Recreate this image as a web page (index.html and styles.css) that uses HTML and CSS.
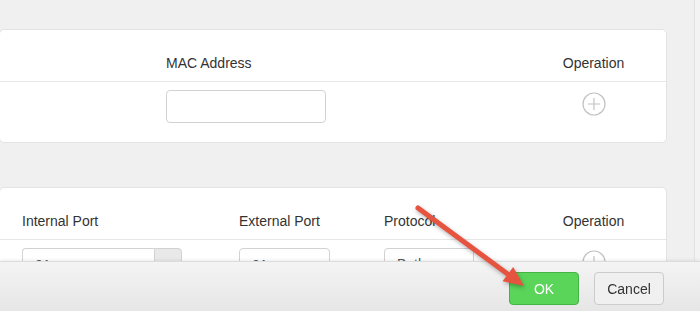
FILE: index.html
```html
<!DOCTYPE html>
<html lang="en">
<head>
    <meta charset="UTF-8">
    <title>Port Settings</title>
    <link rel="stylesheet" href="styles.css">
</head>
<body>
    <div class="layout">
        <main class="page">
            <section class="card card-mac">
                <div class="row head">
                    <div></div>
                    <div>MAC Address</div>
                    <div class="op">Operation</div>
                </div>
                <div class="row body">
                    <div></div>
                    <div><input class="field field-mac" type="text"></div>
                    <div class="op"><span class="add-btn"><svg viewBox="0 0 24 24" width="24" height="24"><circle cx="12" cy="12" r="11" /><path d="M6 12h12M12 6v12" /></svg></span></div>
                </div>
            </section>

            <section class="card card-ports">
                <div class="row head">
                    <div></div>
                    <div>Internal Port</div>
                    <div>External Port</div>
                    <div>Protocol</div>
                    <div class="op">Operation</div>
                </div>
                <div class="row body">
                    <div></div>
                    <div class="input-group">
                        <input class="field field-group" type="text" value="21">
                        <span class="addon"></span>
                    </div>
                    <div><input class="field field-ext" type="text" value="21"></div>
                    <div><div class="field field-select">Both</div></div>
                    <div class="op"><span class="add-btn"><svg viewBox="0 0 24 24" width="24" height="24"><circle cx="12" cy="12" r="11" /><path d="M6 12h12M12 6v12" /></svg></span></div>
                </div>
            </section>
        </main>
        <div class="rail"></div>
    </div>

    <footer class="footer">
        <button class="btn btn-ok">OK</button>
        <button class="btn btn-cancel">Cancel</button>
    </footer>

    <!-- annotation arrow pointing at OK -->
    <svg class="arrow" width="700" height="311" viewBox="0 0 700 311">
        <line x1="418" y1="208" x2="509" y2="275" />
        <polygon points="524,286 502.6,281.3 513.2,266.9" />
    </svg>
</body>
</html>
```

FILE: styles.css
```css
html, body {
    margin: 0;
    height: 100%;
}
body {
    font-family: "Liberation Sans", Helvetica, Arial, sans-serif;
    font-size: 14px;
    color: #333;
    background-color: #f0f0f0;
    overflow: hidden;
}
.layout {
    display: flex;
    height: 100%;
}
.page {
    width: 694px;
    padding-top: 29px;
}
.rail {
    flex: 1;
    border-left: 1px solid #e2e2e2;
    background-color: #f3f3f3;
}
.card {
    box-sizing: border-box;
    width: 668px;
    margin-left: -1px;
    background-color: #fff;
    border: 1px solid #e3e3e3;
    border-radius: 5px;
}
.card-ports {
    margin-top: 44px;
}
.row {
    display: grid;
}
.card-mac .row {
    grid-template-columns: 166px 355px 145px;
}
.card-ports .row {
    grid-template-columns: 22px 217px 145px 137px 145px;
}
.head {
    line-height: 20px;
    padding: 23px 0 8px;
    border-bottom: 1px solid #e6e6e6;
}
.body {
    padding: 8px 0 19px;
    align-items: start;
}
.op {
    text-align: center;
}
.add-btn {
    display: inline-block;
    margin-top: 2px;
}
.add-btn svg {
    display: block;
    fill: none;
    stroke: #c2c2c2;
    stroke-width: 1.2;
}
.field {
    box-sizing: border-box;
    height: 33px;
    padding: 0 12px;
    border: 1px solid #d2d2d2;
    border-radius: 4px;
    background-color: #fff;
    font-family: inherit;
    font-size: 14px;
    color: #555;
    outline: none;
}
.field-mac {
    width: 160px;
}
.field-ext {
    width: 91px;
}
.field-select {
    width: 90px;
    line-height: 31px;
}
.input-group {
    display: flex;
    width: 160px;
}
.field-group {
    flex: 1;
    min-width: 0;
    border-right: none;
    border-radius: 4px 0 0 4px;
}
.addon {
    width: 28px;
    height: 33px;
    box-sizing: border-box;
    background-color: #e9e9e9;
    border: 1px solid #d2d2d2;
    border-radius: 0 4px 4px 0;
}
.footer {
    position: fixed;
    left: 0;
    right: 0;
    bottom: 0;
    height: 50px;
    box-sizing: border-box;
    display: flex;
    justify-content: flex-end;
    gap: 15px;
    padding: 10px 36px 0 0;
    background: linear-gradient(#f4f4f4, #e6e6e6);
    border-top: 1px solid #dcdcdc;
    box-shadow: 0 -1px 3px rgba(0, 0, 0, 0.08);
}
.btn {
    width: 70px;
    height: 33px;
    border-radius: 4px;
    font-family: inherit;
    font-size: 14px;
    cursor: pointer;
}
.btn-ok {
    background-color: #5ad55a;
    border: 1px solid #44b544;
    color: #fff;
}
.btn-cancel {
    background-color: #f0f0f0;
    border: 1px solid #cccccc;
    color: #333;
}
.arrow {
    position: fixed;
    left: 0;
    top: 0;
    pointer-events: none;
    filter: drop-shadow(1px 2px 2px rgba(0, 0, 0, 0.3));
}
.arrow line {
    stroke: #e6533f;
    stroke-width: 5;
    stroke-linecap: round;
}
.arrow polygon {
    fill: #e6533f;
}
```
